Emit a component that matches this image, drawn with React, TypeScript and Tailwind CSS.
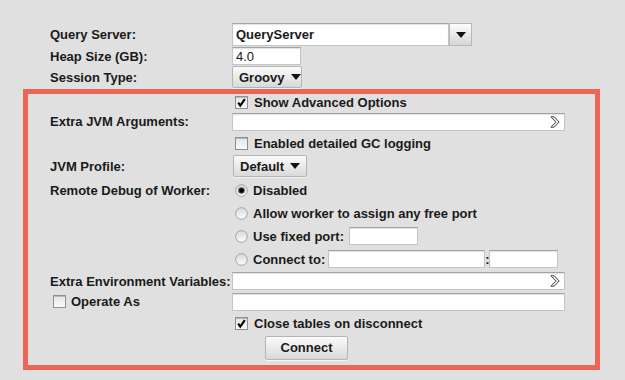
import React from "react";

const fieldCls =
  "bg-white border border-[#c4c4c4] border-t-[#a3a3a3] shadow-[inset_0_1px_1px_rgba(0,0,0,0.12)] flex items-center";

function Field({ w, h = 18, children, chevron, bold }: { w: number; h?: number; children?: React.ReactNode; chevron?: boolean; bold?: boolean }) {
  return (
    <div className={fieldCls + " relative pl-[3px] " + (bold ? "font-bold" : "font-normal")} style={{ width: w, height: h }}>
      {children}
      {chevron && (
        <svg className="absolute right-[4px] top-1/2 -translate-y-1/2" width="10" height="12" viewBox="0 0 10 12">
          <path d="M0.8 0.8 H4.2 L9.2 6 L4.2 11.2 H0.8 L5.8 6 Z" fill="#e6e6e6" stroke="#4a4a4a" strokeWidth="1" strokeLinejoin="round" />
        </svg>
      )}
    </div>
  );
}

function Tri() {
  return (
    <svg width="10" height="6" viewBox="0 0 10 6">
      <path d="M0 0 H10 L5 6 Z" fill="#111" />
    </svg>
  );
}

function Btn({ w, h = 22, children, center }: { w: number; h?: number; children: React.ReactNode; center?: boolean }) {
  return (
    <div
      className={
        "flex items-center gap-[6px] border border-[#b4b4b4] rounded-[2px] bg-gradient-to-b from-[#fbfbfb] to-[#d9d9d9] shadow-[0_1px_0_rgba(255,255,255,0.7)] " +
        (center ? "justify-center" : "pl-[6px]")
      }
      style={{ width: w, height: h }}
    >
      {children}
    </div>
  );
}

function Check({ checked }: { checked?: boolean }) {
  return (
    <svg width="13" height="13" viewBox="0 0 13 13" className="shrink-0">
      <defs>
        <linearGradient id="cbg" x1="0" y1="0" x2="0" y2="1">
          <stop offset="0" stopColor="#e4e4e4" />
          <stop offset="1" stopColor="#fafafa" />
        </linearGradient>
      </defs>
      <rect x="0.5" y="0.5" width="12" height="12" fill="url(#cbg)" stroke="#8f8f8f" />
      <line x1="1" y1="1.5" x2="12" y2="1.5" stroke="#b8b8b8" />
      {checked && <path d="M3.2 6.6 L5.3 9.6 L9.8 3.2" fill="none" stroke="#000" strokeWidth="2.1" strokeLinecap="butt" strokeLinejoin="miter" />}
    </svg>
  );
}

function Radio({ on }: { on?: boolean }) {
  return (
    <svg width="13" height="13" viewBox="0 0 13 13" className="shrink-0">
      <defs>
        <linearGradient id="rbg" x1="0" y1="0" x2="0" y2="1">
          <stop offset="0" stopColor="#d8d8d8" />
          <stop offset="1" stopColor="#fdfdfd" />
        </linearGradient>
      </defs>
      <circle cx="6.5" cy="6.5" r="5.8" fill="url(#rbg)" stroke="#9a9a9a" strokeWidth="0.9" />
      {on && (
        <>
          <circle cx="6.5" cy="6.5" r="3.3" fill="#555" />
          <circle cx="6.5" cy="6.5" r="2.3" fill="#000" />
        </>
      )}
    </svg>
  );
}

function Row({ h, label, children }: { h: number; label?: React.ReactNode; children?: React.ReactNode }) {
  return (
    <div className="flex items-center" style={{ height: h }}>
      <div className="w-[182px] shrink-0 flex items-center">{label}</div>
      <div className="flex items-center">{children}</div>
    </div>
  );
}

export default function App() {
  return (
    <div className="w-[625px] h-[380px] bg-[#e0e0e0] overflow-hidden font-['Liberation_Sans',Arial,sans-serif] text-[13px] font-bold text-[#1a1a1a] leading-none">
      <div className="pt-[23px] pl-[50px]">
        <Row h={23} label="Query Server:">
          <div className="flex" style={{ height: 23 }}>
            <div className={fieldCls + " w-[217px] h-[23px] pl-[3px]"}>QueryServer</div>
            <div className="w-[23px] h-[23px] border border-[#b8b8b8] bg-gradient-to-b from-[#fdfdfd] to-[#d6d6d6] flex items-center justify-center">
              <Tri />
            </div>
          </div>
        </Row>
        <Row h={20} label="Heap Size (GB):">
          <Field w={69} h={18}>4.0</Field>
        </Row>
        <Row h={22} label="Session Type:">
          <Btn w={70}>
            <span>Groovy</span>
            <Tri />
          </Btn>
        </Row>
      </div>
      <div className="ml-[23px] mt-[1px] w-[577px] h-[281px] border-[5px] border-[#ec6555] pl-[22px]">
        <Row h={17}>
          <div className="ml-[3px] flex items-center gap-[6px]">
            <Check checked />
            <span>Show Advanced Options</span>
          </div>
        </Row>
        <Row h={21} label="Extra JVM Arguments:">
          <Field w={333} chevron />
        </Row>
        <Row h={22}>
          <div className="ml-[3px] flex items-center gap-[6px]">
            <Check />
            <span>Enabled detailed GC logging</span>
          </div>
        </Row>
        <Row h={24} label="JVM Profile:">
          <div className="ml-[1px]">
            <Btn w={74}>
              <span>Default</span>
              <Tri />
            </Btn>
          </div>
        </Row>
        <Row h={24} label="Remote Debug of Worker:">
          <div className="ml-[3px] flex items-center gap-[5px]">
            <Radio on />
            <span>Disabled</span>
          </div>
        </Row>
        <Row h={23}>
          <div className="ml-[3px] flex items-center gap-[5px]">
            <Radio />
            <span>Allow worker to assign any free port</span>
          </div>
        </Row>
        <Row h={22}>
          <div className="ml-[3px] flex items-center gap-[5px]">
            <Radio />
            <span>Use fixed port:</span>
            <Field w={69} />
          </div>
        </Row>
        <Row h={24}>
          <div className="ml-[3px] flex items-center gap-[5px]">
            <Radio />
            <span>Connect to:</span>
            <div className="flex items-center -ml-[2px]">
              <Field w={157} />
              <span className="w-[4px] text-center">:</span>
              <Field w={69} />
            </div>
          </div>
        </Row>
        <Row h={20} label="Extra Environment Variables:">
          <Field w={333} chevron />
        </Row>
        <Row
          h={21}
          label={
            <div className="ml-[3px] flex items-center gap-[5px]">
              <Check />
              <span>Operate As</span>
            </div>
          }
        >
          <Field w={333} />
        </Row>
        <Row h={22}>
          <div className="ml-[3px] flex items-center gap-[6px]">
            <Check checked />
            <span>Close tables on disconnect</span>
          </div>
        </Row>
        <Row h={27}>
          <div className="ml-[33px]">
            <Btn w={83} h={24} center>
              <span>Connect</span>
            </Btn>
          </div>
        </Row>
      </div>
    </div>
  );
}
